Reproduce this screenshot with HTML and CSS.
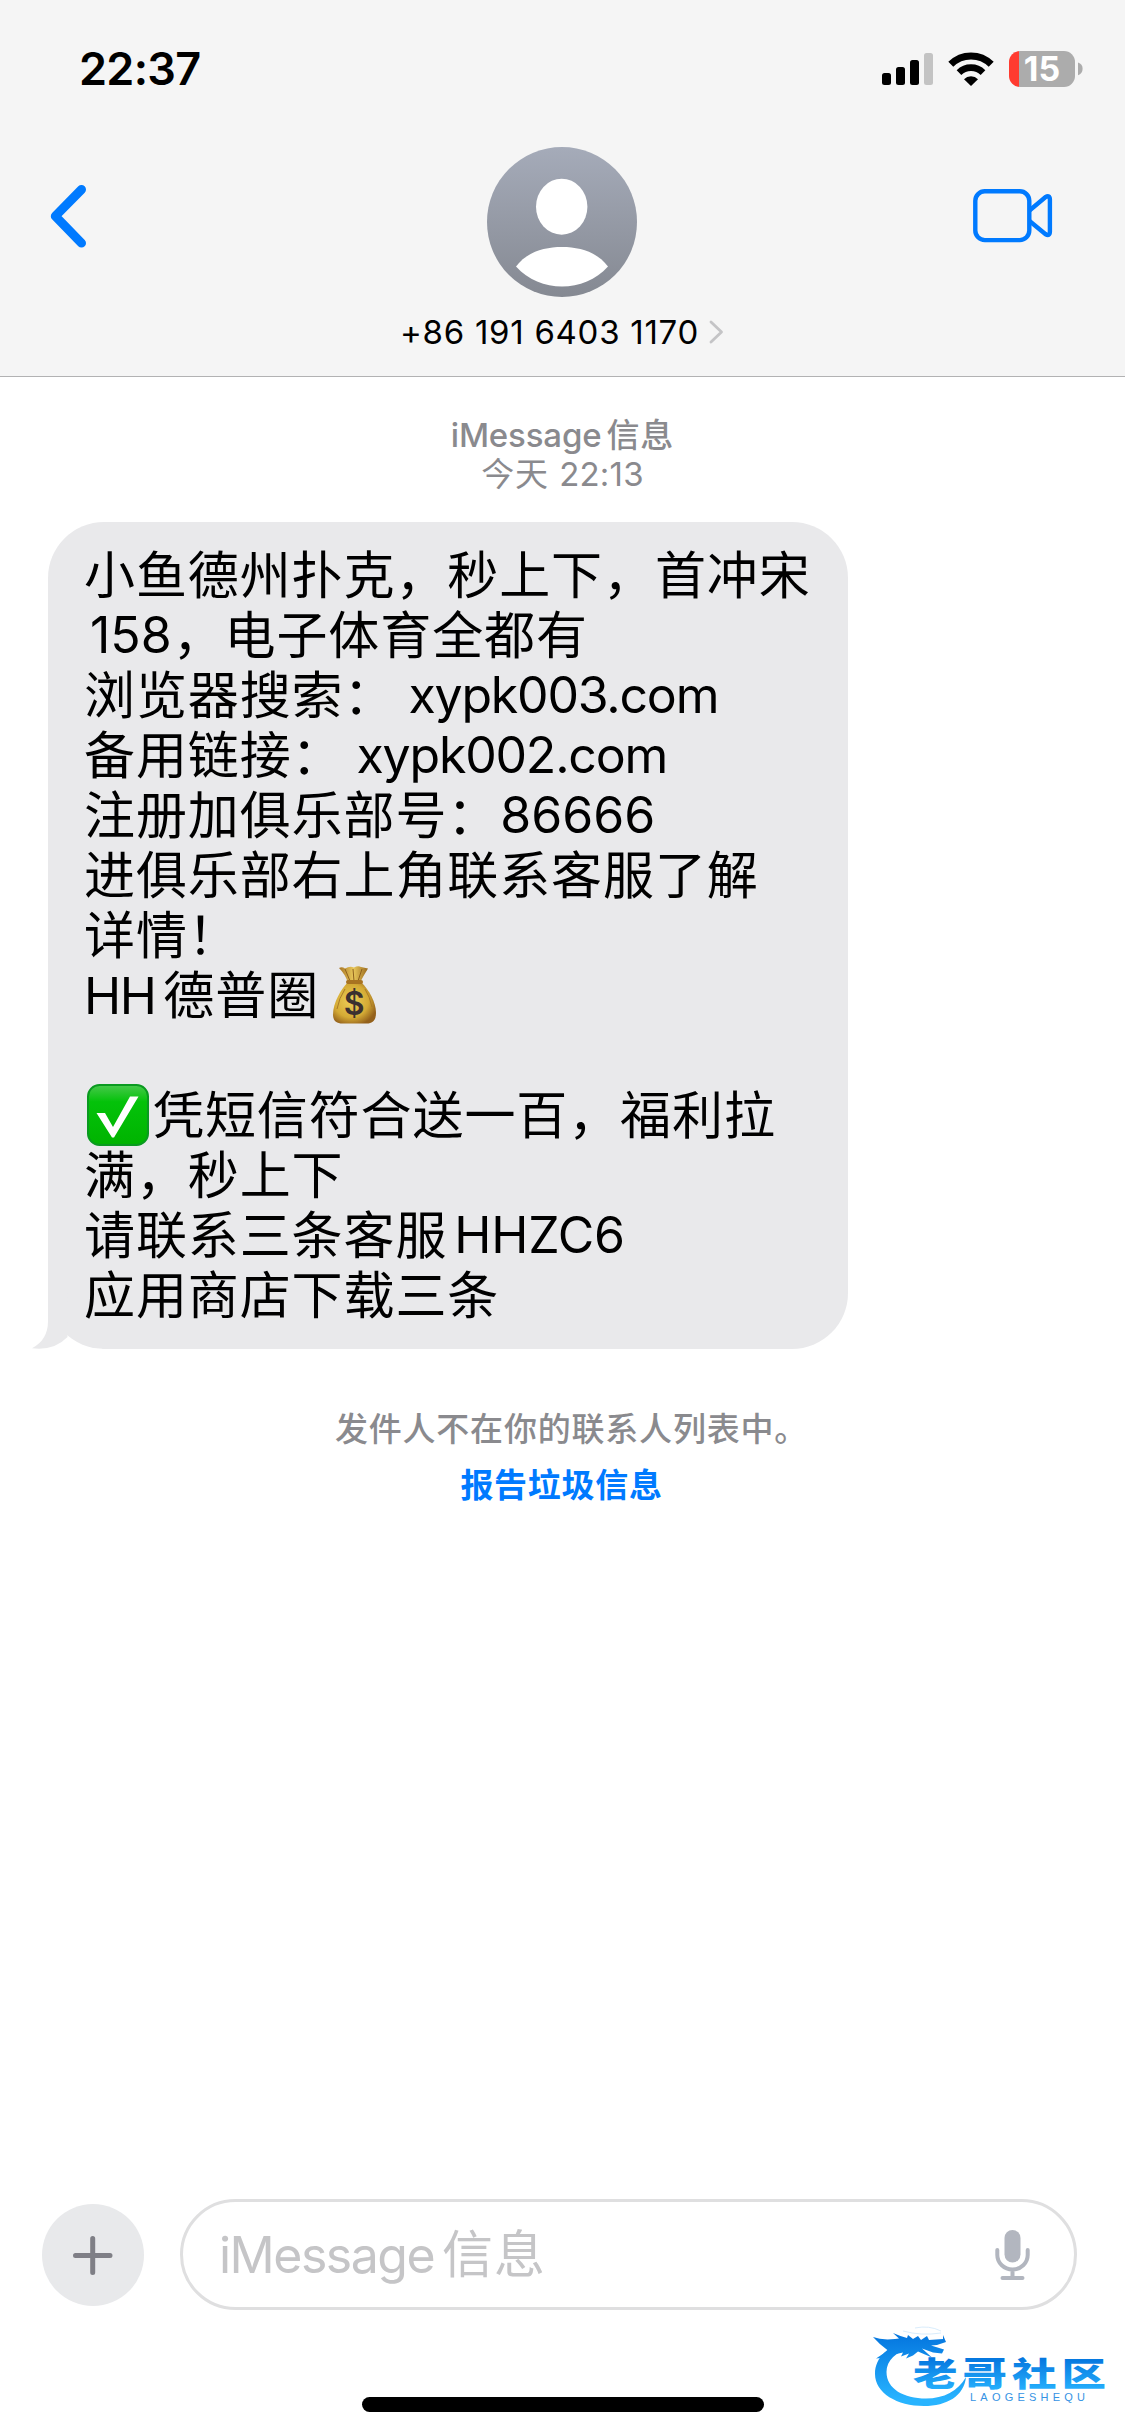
FILE: index.html
```html
<!DOCTYPE html>
<html lang="zh-CN">
<head>
<meta charset="utf-8">
<title>iMessage信息</title>
<link rel="stylesheet" href="styles.css">
</head>
<body>
<header class="header">
  <div class="status">
    <span class="time">22:37</span>
    <div class="status-icons">
      <svg class="signal" width="51" height="32" viewBox="0 0 51 32">
        <rect x="0" y="20" width="9" height="12" rx="2.5"/>
        <rect x="14" y="14" width="9" height="18" rx="2.5"/>
        <rect x="28" y="7" width="9" height="25" rx="2.5"/>
        <rect x="42" y="0" width="9" height="32" rx="2.5" fill="#c3c3c3"/>
      </svg>
      <svg class="wifi" width="46" height="34" viewBox="0 0 46 34">
        <path d="M2.8 12.3a28.6 28.6 0 0 1 40.4 0" fill="none" stroke="#000" stroke-width="7"/>
        <path d="M11 20.6a17 17 0 0 1 24 0" fill="none" stroke="#000" stroke-width="6.6"/>
        <path d="M16 27.2a10 10 0 0 1 14 0L23 34z"/>
      </svg>
      <div class="battery"><span class="level">15</span></div>
      <svg class="nub" width="5" height="14" viewBox="0 0 5 14"><path d="M0 0.5q4.6 1.5 4.6 6.3T0 13.3z" fill="#acacac"/></svg>
    </div>
  </div>
  <div class="nav">
    <svg class="back" width="40" height="66" viewBox="0 0 40 66"><path d="M34.500 6.500L8.300 33.200l26.200 26.900" fill="none" stroke="#007aff" stroke-width="9" stroke-linecap="round" stroke-linejoin="round"/></svg>
    <div class="contact">
      <svg class="avatar" width="150" height="150" viewBox="0 0 150 150">
        <defs><linearGradient id="av" x1="0" y1="0" x2="0" y2="1"><stop offset="0" stop-color="#a5abb9"/><stop offset="1" stop-color="#858992"/></linearGradient></defs>
        <circle cx="75" cy="75" r="75" fill="url(#av)"/>
        <ellipse cx="74.7" cy="59.7" rx="25.7" ry="28" fill="#fff"/>
        <path d="M29 119.500C40 105 57 100 75 100s35 5 46 19.500C109 133 92 139.500 75 139.500S41 133 29 119.500z" fill="#fff"/>
      </svg>
      <div class="number"><span>+86 191 6403 1170</span>
        <svg width="15" height="24" viewBox="0 0 15 24"><path d="M2 2l10.500 10L2 22" fill="none" stroke="#c4c4c6" stroke-width="2.800" stroke-linecap="round" stroke-linejoin="round"/></svg>
      </div>
    </div>
    <svg class="video" width="80" height="54" viewBox="0 0 80 54" fill="none" stroke="#007aff" stroke-width="4.400" stroke-linejoin="round">
      <rect x="2.300" y="2.300" width="54" height="48.800" rx="9.500"/>
      <path d="M56.500 21.500L72.300 8.200q4.600-2.800 4.600 2.400v32q0 5.200-4.600 2.400L56.500 32"/>
    </svg>
  </div>
</header>

<main class="thread">
  <div class="stamp">
    <div class="stamp-service"><span>iMessage</span>信息</div>
    <div class="stamp-time">今天 <span>22:13</span></div>
  </div>
  <div class="bubble">
    <p>小鱼德州扑克，秒上下，首冲宋</p>
    <p><span class="num lead">158</span>，电子体育全都有</p>
    <p>浏览器搜索：<span class="url">xypk003.com</span></p>
    <p>备用链接：<span class="url">xypk002.com</span></p>
    <p>注册加俱乐部号：<span class="num">86666</span></p>
    <p>进俱乐部右上角联系客服了解</p>
    <p>详情！</p>
    <p class="with-emoji"><span class="code hh">HH</span>德普圈<svg class="emoji bag" width="68" height="60" viewBox="0 0 68 60">
      <defs><radialGradient id="bag" cx=".42" cy=".45" r=".62"><stop offset="0" stop-color="#edcf58"/><stop offset=".65" stop-color="#d4aa35"/><stop offset="1" stop-color="#94611b"/></radialGradient>
      <linearGradient id="neck" x1="0" x2="1"><stop offset="0" stop-color="#a87524"/><stop offset=".5" stop-color="#e8c75a"/><stop offset="1" stop-color="#9a691d"/></linearGradient></defs>
      <path d="M18 3q3-1.500 6 .5 5-3 9-1 4-2 7-.5l7 1.500q-5 8-8 14H27Q24 9 18 3z" fill="url(#neck)"/>
      <path d="M24 4l5 12M32 4l1 12M41 4l-4 12" stroke="#8d601d" stroke-width="1" fill="none"/>
      <path d="M26.500 17.500h14C48 25 55 37 55 48c0 8-4 10.500-9 10.500H21.500c-6 0-9.500-2.500-9.500-9 0-12 8-25 14.500-32z" fill="url(#bag)"/>
      <path d="M24 24q-6 9-8 20M44 24q5 8 7 18" stroke="#a97a28" fill="none"/>
      <rect x="25" y="15" width="17" height="4" rx="2" fill="#a87321"/>
      <text x="33.500" y="50" text-anchor="middle" font-family="Inter,sans-serif" font-size="32" font-weight="600" fill="#3b3030">$</text>
    </svg></p>
    <p class="blank"></p>
    <p class="with-emoji"><svg class="emoji check" width="69" height="64" viewBox="0 0 69 64">
      <defs><linearGradient id="gr" x1="0" y1="0" x2="0" y2="1"><stop offset="0" stop-color="#48c94c"/><stop offset=".28" stop-color="#04c20a"/><stop offset="1" stop-color="#00b300"/></linearGradient></defs>
      <rect x="4" y="2" width="60" height="60" rx="11.500" fill="url(#gr)" stroke="#0a9a20" stroke-width="2"/>
      <path d="M12.500 30h8.500l8 14L46 13.500h8.500L30 54.500h-2z" fill="#fff"/>
    </svg>凭短信符合送一百，福利拉</p>
    <p>满，秒上下</p>
    <p>请联系三条客服<span class="code">HHZC6</span></p>
    <p>应用商店下载三条</p>
    <svg class="tail" width="70" height="60" viewBox="0 0 70 60">
      <path d="M0 60H70V59.700Q48 59.700 35.500 48Q22 61 0 59.700z" fill="#fff"/>
      <path d="M16 0V32Q16 51 0 59.200Q22 62 35.500 48L36 0z" fill="#e9e9eb"/>
    </svg>
  </div>
  <p class="notice">发件人不在你的联系人列表中。</p>
  <a class="report">报告垃圾信息</a>
</main>

<footer class="composer">
  <div class="plus"><svg width="102" height="102" viewBox="0 0 102 102"><path d="M33.500 51.500h34.500M50.700 34.500v34" stroke="#7f7f86" stroke-width="5" stroke-linecap="round"/></svg></div>
  <div class="field">
    <div class="placeholder"><span>iMessage</span>信息</div>
    <svg class="mic" width="36" height="50" viewBox="0 0 36 50" fill="none" stroke="#b2b6bf" stroke-width="4" stroke-linecap="round">
      <rect x="9.500" y="0" width="16" height="32.500" rx="8" fill="#b2b6bf" stroke="none"/>
      <path d="M2.300 20v5a15.200 14.500 0 0 0 30.400 0v-5M17.500 40v7M7.500 48h20"/>
    </svg>
  </div>
</footer>
<div class="home"></div>

<svg class="watermark" width="245" height="90" viewBox="0 0 245 90">
  <defs>
    <linearGradient id="wm" gradientUnits="userSpaceOnUse" x1="0" y1="14" x2="0" y2="78"><stop offset="0" stop-color="#0577df"/><stop offset="1" stop-color="#28b4ff"/></linearGradient>
    <linearGradient id="wt" x1="0" y1="0" x2="0" y2="1"><stop offset=".25" stop-color="#0577df"/><stop offset=".95" stop-color="#28b4ff"/></linearGradient>
  </defs>
  <path d="M38 18C18 23 4 35 4 52c0 19 22 32 49 32 23 0 40-10 42-29-8 14-22 21.500-40 21.500C33 76.500 15.500 67 15.500 50c0-12 10-20 23-24z" fill="url(#wm)"/>
  <path d="M2 15q9 3.500 22 2l4-.5L22 11q8 3.500 14 5l1-3 5 4 5-3 3 4 6-4 2 4 14-1v-4l3 7-9 3-6 .5 13 4-2 4-9-1-11-4 10 9-14-6-5 4-7 3 3-5-8 3 2-4-9 2-8 3-10 1 12-8Q8 22 2 15z" fill="url(#wm)"/>
  <path d="M32 9q18 5 38 2M44 6q14-3 26 3" fill="none" stroke="#cfe7fa" stroke-width=".8"/>
  <text transform="translate(42 63.500) scale(1.330 1)" font-size="33.500" letter-spacing="3.700" fill="url(#wt)" font-family="Noto Sans CJK SC,sans-serif" font-weight="900">老哥社区</text>
  <text x="99" y="78.500" font-family="Liberation Sans,sans-serif" font-size="11" textLength="115" fill="#3593e4">LAOGESHEQU</text>
</svg>
</body>
</html>
```
FILE: styles.css
```css
* { box-sizing: border-box; }
body {
  margin: 0;
  width: 1125px;
  height: 2436px;
  display: flex;
  flex-direction: column;
  position: relative;
  overflow: hidden;
  background: #fff;
  color: #000;
  font-family: Inter, "Noto Sans CJK SC", sans-serif;
}
p { margin: 0; }
svg { display: block; flex: none; }

.header {
  height: 377px;
  background: #f5f5f5;
  border-bottom: 1px solid #b2b2b3;
}
.status {
  height: 147px;
  padding: 41px 42px 0 79px;
  display: flex;
  justify-content: space-between;
  align-items: flex-start;
}
.time { font-size: 45px; line-height: 55px; font-weight: 600; letter-spacing: -0.7px; }
.status-icons { display: flex; align-items: center; height: 36px; margin-top: 10px; }
.wifi { margin-left: 15px; }
.battery {
  width: 66px;
  height: 36px;
  margin-left: 15px;
  border-radius: 11px;
  background: linear-gradient(90deg, #ff3b30 10px, #acacac 10px);
  display: flex;
  justify-content: center;
}
.level { color: #fff; font-size: 34px; line-height: 36px; font-weight: 700; }
.nub { margin-left: 3px; }

.nav {
  height: 229px;
  padding: 0 72px 0 47px;
  display: grid;
  grid-template-columns: 340px 350px 1fr;
}
.back { margin-top: 36px; }
.contact { display: flex; flex-direction: column; align-items: center; }
.number { display: flex; align-items: center; gap: 10px; margin-top: 15px; font-size: 33px; line-height: 40px; letter-spacing: 0.72px; white-space: nowrap; }
.video { justify-self: end; margin-top: 42px; }

.thread { flex: 1; display: flex; flex-direction: column; align-items: center; }
.stamp { margin-top: 39px; text-align: center; color: #8a8a8e; font-size: 33px; line-height: 39px; letter-spacing: 0.9px; }
.stamp-service { font-weight: 500; }
.stamp-service span { margin-right: 5px; letter-spacing: -0.15px; }
.stamp-time span { letter-spacing: 0.2px; }

.bubble {
  position: relative;
  align-self: flex-start;
  width: 800px;
  height: 827px;
  margin: 28px 0 0 48px;
  padding: 24px 20px 0 36px;
  border-radius: 56px;
  background: #e9e9eb;
  font-size: 51px;
  letter-spacing: 0.9px;
}
.bubble p { height: 60px; line-height: 60px; white-space: nowrap; }
.bubble p span { font-size: 50px; line-height: 56px; vertical-align: 1px; }
.bubble .lead { margin: 0 1px 0 6px; }
.num { margin-left: 1px; letter-spacing: 0; }
.url { margin-left: 13px; letter-spacing: -1.2px; }
.code { margin-left: 7px; letter-spacing: -0.2px; }
.bubble .hh { margin: 0 8px 0 0; letter-spacing: -1.5px; }
.with-emoji { display: flex; align-items: center; }
.emoji { margin-bottom: 2px; }
.bag { margin-left: 2px; }
.tail { position: absolute; left: -16px; bottom: 0; }

.notice { margin: 60px 0 0 18px; color: #8a8a8e; font-size: 33px; line-height: 40px; font-weight: 500; letter-spacing: 0.8px; }
.report { margin: 16px 2px 0 0; color: #007aff; font-size: 33px; line-height: 40px; font-weight: 700; letter-spacing: 0.7px; }

.composer { display: flex; align-items: center; padding: 0 48px 0 42px; height: 111px; }
.plus { width: 102px; height: 102px; border-radius: 50%; background: #e8e9eb; }
.field {
  flex: 1;
  height: 111px;
  margin-left: 36px;
  padding: 0 43px 0 36px;
  border: 3px solid #dfdfe0;
  border-radius: 56px;
  display: flex;
  align-items: center;
  justify-content: space-between;
}
.placeholder { color: #c5c5c7; font-size: 51px; line-height: 60px; letter-spacing: 1px; }
.placeholder span { margin-right: 8px; font-size: 50px; letter-spacing: -1.5px; }
.home { width: 402px; height: 15px; margin: 87px auto 24px 362px; border-radius: 8px; background: #000; flex: none; }
.watermark { position: absolute; left: 871px; top: 2322px; }
```
